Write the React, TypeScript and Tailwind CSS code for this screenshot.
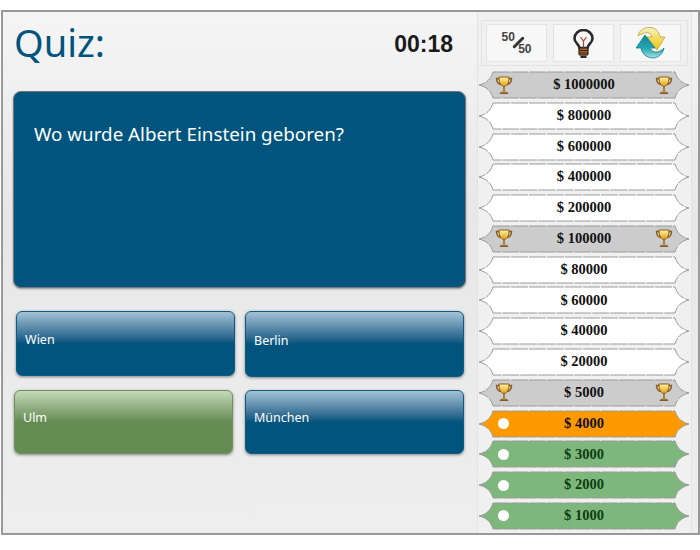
const ladder = [
  { sum: "$ 1000000", kind: "milestone" },
  { sum: "$ 800000", kind: "open" },
  { sum: "$ 600000", kind: "open" },
  { sum: "$ 400000", kind: "open" },
  { sum: "$ 200000", kind: "open" },
  { sum: "$ 100000", kind: "milestone" },
  { sum: "$ 80000", kind: "open" },
  { sum: "$ 60000", kind: "open" },
  { sum: "$ 40000", kind: "open" },
  { sum: "$ 20000", kind: "open" },
  { sum: "$ 5000", kind: "milestone" },
  { sum: "$ 4000", kind: "current" },
  { sum: "$ 3000", kind: "done" },
  { sum: "$ 2000", kind: "done" },
  { sum: "$ 1000", kind: "done" },
];

const shapeFill: Record<string, string> = {
  milestone: "#cccccc",
  open: "#ffffff",
  current: "#ff9900",
  done: "#7db77c",
};

function Trophy() {
  return (
    <svg width="18" height="19" viewBox="0 0 18 19" className="shrink-0">
      <defs>
        <linearGradient id="cup" x1="0" y1="0" x2="0" y2="1">
          <stop offset="0" stopColor="#fff3a0" />
          <stop offset="1" stopColor="#e0a010" />
        </linearGradient>
      </defs>
      <path d="M4.500 2.500H1.500C1.500 6 3 8 6 8.500M13.500 2.500H16.500C16.500 6 15 8 12 8.500" fill="none" stroke="#8a5a18" strokeWidth="1.400" />
      <path d="M4 1H14C14 6 13 9.500 9 10.500C5 9.500 4 6 4 1Z" fill="url(#cup)" stroke="#8a5a18" strokeWidth="1" />
      <path d="M9 10.500V15" stroke="#9a6a20" strokeWidth="1.600" />
      <path d="M5 17.500C5.500 15.500 12.500 15.500 13 17.500Z" fill="#c89030" stroke="#8a5a18" strokeWidth="1" />
    </svg>
  );
}

function Bulb() {
  return (
    <svg width="21" height="29" viewBox="0 0 21 29">
      <path d="M6.500 19C6 15 1.500 14 1.500 9.500A9 8.500 0 0 1 19.500 9.500C19.500 14 15 15 14.500 19Z" fill="#f6f6f6" stroke="#2a2a2a" strokeWidth="2.600" />
      <path d="M7.500 8L10.500 12L13.500 8M10.500 12V19" fill="none" stroke="#b0403a" strokeWidth="1.200" />
      <rect x="6" y="19" width="9" height="7" rx="1" fill="#a8622a" stroke="#33241a" strokeWidth="1.200" />
      <path d="M6 21.500H15M6 24H15" stroke="#33241a" strokeWidth="1.200" />
      <path d="M7.500 26.500H13.500V29H7.500Z" fill="#2a2a2a" />
    </svg>
  );
}

function Swap() {
  return (
    <svg width="30" height="32" viewBox="0 0 30 32">
      <defs>
        <linearGradient id="amber" x1="0" y1="0" x2="0" y2="1">
          <stop offset="0" stopColor="#f3f1c0" />
          <stop offset="1" stopColor="#f5c400" />
        </linearGradient>
        <linearGradient id="teal" x1="0" y1="0" x2="0" y2="1">
          <stop offset="0" stopColor="#0c8798" />
          <stop offset="0.6" stopColor="#2aa8b0" />
          <stop offset="1" stopColor="#a8e2e0" />
        </linearGradient>
      </defs>
      <path d="M2 9C3 3 9 0 15 0.500C20 1 23 5 24 10H29L21 23L11 10H16C15 7 12 5 9 6C6 6.500 4 8 2 9Z" fill="url(#amber)" stroke="#b5a63a" strokeWidth="0.800" />
      <path d="M9 8L19 21H14.500C15 24 18 25.500 21 25C24 24.500 26 23 28 21C27 27 22 31 17 31C11 31 6 27 5 21H0Z" fill="url(#teal)" stroke="#0f7f90" strokeWidth="0.800" />
    </svg>
  );
}

function Rung({ sum, kind }: { sum: string; kind: string }) {
  const fill = shapeFill[kind];
  const isMilestone = kind === "milestone";
  const hasDot = kind === "current" || kind === "done";
  return (
    <div className="relative flex h-[28px] w-[210px] items-center justify-between px-[16px]">
      <svg viewBox="0 0 210 28" width="210" height="28" className="absolute inset-0">
        <path
          d="M14 1H196C198 8 202 12 210 14C202 16 198 20 196 27H14C12 20 8 16 0 14C8 12 12 8 14 1Z"
          fill={fill}
          stroke="#9a9a9a"
          strokeWidth="1"
          strokeDasharray="17 1"
        />
      </svg>
      <span className="relative flex w-[18px] justify-center">
        {isMilestone && <Trophy />}
        {hasDot && <span className="ml-[-2px] h-[11px] w-[11px] rounded-full bg-white" />}
      </span>
      <span
        className={`relative font-['Liberation_Serif',serif] text-[14.500px] font-bold ${
          kind === "done" ? "text-[#0d3d12]" : "text-[#111111]"
        }`}
      >
        {sum}
      </span>
      <span className="relative flex w-[18px] justify-center">{isMilestone && <Trophy />}</span>
    </div>
  );
}

function Lifeline({ children }: { children: React.ReactNode }) {
  return (
    <div className="flex h-[38px] w-[61px] items-center justify-center border border-[#e3e3e3] bg-[#f7f7f7]">
      {children}
    </div>
  );
}

function Answer({ label, correct, className }: { label: string; correct?: boolean; className: string }) {
  return (
    <div
      className={`flex w-[219px] items-start rounded-[6px] border text-[12.500px] text-white shadow-[0_1px_3px_rgba(60,60,60,0.6)] ${
        correct
          ? "border-[#6e9160] bg-gradient-to-b from-[#c6d8ba] via-[#648c52] via-50% to-[#648c52]"
          : "border-[#0a5c86] bg-gradient-to-b from-[#a3c3d6] via-[#00547d] via-50% to-[#00547d]"
      } ${className}`}
    >
      <span className="pl-[8px]">{label}</span>
    </div>
  );
}

export default function App() {
  return (
    <div className="h-[550px] w-[700px] overflow-hidden bg-white pt-[10px] pl-[1px] font-['Noto_Sans',sans-serif]">
      <div className="flex h-[525px] w-[699px] border-2 border-[#999999] bg-gradient-to-b from-[#f5f5f5] via-[#e7e7e7] via-40% to-[#eeeeee]">
        <div className="w-[473px] pl-[11px]">
          <div className="flex h-[79px] items-start justify-between pr-[23px]">
            <h1 className="pt-[4px] text-[38px] leading-[52px] text-[#00547d]">Quiz:</h1>
            <span className="pt-[19px] font-['Liberation_Sans',sans-serif] text-[23px] leading-[26px] font-bold text-[#1a1a1a]">
              00:18
            </span>
          </div>
          <div className="ml-[-1px] h-[197px] w-[453px] rounded-[8px] border border-[#777777] bg-[#00547d] pl-[20px] pt-[28px] text-[18.800px] leading-[28px] text-white shadow-[0_1px_2px_rgba(60,60,60,0.5)]">
            Wo wurde Albert Einstein geboren?
          </div>
          <div className="mt-[23px] flex h-[65px] gap-[10px]">
            <Answer label="Wien" className="ml-[2px] h-[65px] pt-[19px]" />
            <Answer label="Berlin" className="h-[66px] pt-[20px]" />
          </div>
          <div className="mt-[14px] flex h-[64px]">
            <Answer label="Ulm" correct className="h-[64px] pt-[18px]" />
            <Answer label="München" className="ml-[12px] h-[64px] pt-[18px]" />
          </div>
        </div>
        <div className="ml-[1px] flex w-[215px] flex-col border-x border-[#e3e3e3] bg-[#f0f0f0] px-[1px] pt-[8px]">
          <div className="mx-[2px] flex h-[46px] w-[207px] items-center gap-[6px] border border-[#e3e3e3] pl-[4px]">
            <Lifeline>
              <span className="relative h-[30px] w-[32px] font-['Liberation_Sans',sans-serif] text-[12px] leading-none font-bold text-[#444444]">
                <span className="absolute left-[1px] top-[3px]">50</span>
                <span className="absolute left-[10px] top-[13px] h-[3px] w-[15px] -rotate-45 rounded-full bg-[#333333]" />
                <span className="absolute right-[1px] bottom-[3px]">50</span>
              </span>
            </Lifeline>
            <Lifeline>
              <Bulb />
            </Lifeline>
            <Lifeline>
              <Swap />
            </Lifeline>
          </div>
          <div className="mt-[5px] flex h-[459px] flex-col justify-between">
            {ladder.map((r) => (
              <Rung key={r.sum} sum={r.sum} kind={r.kind} />
            ))}
          </div>
        </div>
      </div>
    </div>
  );
}
